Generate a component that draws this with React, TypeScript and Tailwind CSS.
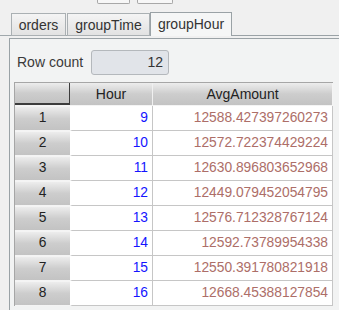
const rows: [number, number, string][] = [
  [1, 9, "12588.427397260273"],
  [2, 10, "12572.722374429224"],
  [3, 11, "12630.896803652968"],
  [4, 12, "12449.079452054795"],
  [5, 13, "12576.712328767124"],
  [6, 14, "12592.73789954338"],
  [7, 15, "12550.391780821918"],
  [8, 16, "12668.45388127854"],
];

const headGrad = "bg-linear-to-b from-[#ededed] via-[#cdcdcd] to-[#c3c3c3]";

export default function App() {
  return (
    <div
      className="w-[339px] h-[310px] overflow-hidden bg-[#f0f0f0] text-[#333]"
      style={{ fontFamily: '"Liberation Sans", Arial, sans-serif' }}
    >
      {/* cut-off toolbar buttons */}
      <div className="flex gap-[7px] pl-[97px]">
        <div className="w-[33px] h-[4px] border-x border-b border-[#a8a8a8] rounded-b-[2px] bg-[#f7f7f7]" />
        <div className="w-[36px] h-[4px] border-x border-b border-[#a8a8a8] rounded-b-[2px] bg-[#f7f7f7]" />
      </div>

      {/* tabs */}
      <div className="flex items-end mt-[9px] h-[23px]">
        <div className="w-[11px] h-full border-b border-[#a0a8ac]" />
        <div className="w-[55px] h-full flex items-center justify-center border border-[#aab0b3] bg-linear-to-b from-[#f4f4f4] to-[#e2e2e2] text-[14px] leading-none">
          orders
        </div>
        <div className="w-[1px] h-full border-b border-[#a0a8ac]" />
        <div className="w-[83px] h-full flex items-center justify-center border border-[#aab0b3] bg-linear-to-b from-[#f4f4f4] to-[#e2e2e2] text-[14px] leading-none">
          groupTime
        </div>
        <div className="w-[82px] h-[24px] flex items-center justify-center border-x border-t border-[#9aa2a6] bg-[#f5f6f6] text-[14px] leading-none pb-[1px]">
          groupHour
        </div>
        <div className="flex-1 h-full border-b border-[#9aa2a6]" />
      </div>

      {/* panel */}
      <div className="ml-[9px] mt-[2px] h-[300px] border-l border-t border-[#9aa2a6] bg-[#f2f3f3]">
        <div className="flex items-center h-[25px] mt-[11px] pl-[7px]">
          <span className="w-[74px] text-[14px] text-[#3a3a3a]">Row count</span>
          <div className="w-[78px] h-[25px] flex items-center justify-end pr-[5px] rounded-[3px] border border-[#b4b8bc] bg-[#e1e4e9] text-[14px] text-[#333]">
            12
          </div>
        </div>

        {/* table */}
        <div className="ml-[4px] mt-[7px] w-[319px] border-l border-t border-[#a6a6a6] bg-white text-[13.8px]">
          <div className="flex h-[23px] bg-[#f4f4f4] text-[14px]">
            <div className={`w-[55px] h-[22px] border-r border-b-2 border-[#3c3c3c] ${headGrad}`} />
            <div className={`w-[83px] h-[22px] flex items-center justify-center border-r border-[#f0f0f0] text-[#222] ${headGrad}`}>
              Hour
            </div>
            <div className={`w-[179px] h-[22px] flex items-center justify-center text-[#222] ${headGrad}`}>
              AvgAmount
            </div>
          </div>
          {rows.map(([n, h, v]) => (
            <div key={n} className="flex h-[25px]">
              <div className="w-[55px] h-[25px] pt-[1px] pb-[1px] bg-[#f4f4f4]">
                <div className={`h-[23px] flex items-center justify-center text-[#222] ${headGrad}`}>
                  {n}
                </div>
              </div>
              <div className="w-[83px] h-[25px] flex items-center justify-end pr-[4px] border-l-2 border-r border-b border-l-white border-[#c6c6c6] text-[#1414ff]">
                {h}
              </div>
              <div className="w-[180px] h-[25px] flex items-center justify-end pr-[4px] border-r border-b border-[#c6c6c6] text-[#ad6e68]">
                {v}
              </div>
            </div>
          ))}
        </div>
      </div>
    </div>
  );
}
